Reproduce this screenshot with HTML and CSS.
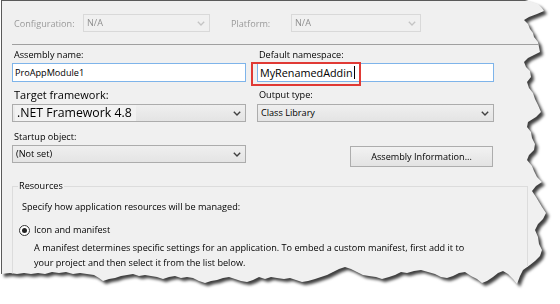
FILE: index.html
```html
<!DOCTYPE html>
<html>
<head>
<meta charset="utf-8">
<link rel="stylesheet" href="styles.css">
</head>
<body>
<div class="sheet">
  <div class="paper">
    <div class="toprow">
      <span class="dlabel cfg">Configuration:</span>
      <div class="combo disabled w-cfg"><span class="val">N/A</span><svg class="chev" width="8" height="5" viewBox="0 0 8 5"><path d="M0.8 0.8 L4 4 L7.2 0.8" fill="none" stroke="#c4c4c4" stroke-width="1.3"/></svg></div>
      <span class="dlabel plat">Platform:</span>
      <div class="combo disabled w-plat"><span class="val">N/A</span><svg class="chev" width="8" height="5" viewBox="0 0 8 5"><path d="M0.8 0.8 L4 4 L7.2 0.8" fill="none" stroke="#c4c4c4" stroke-width="1.3"/></svg></div>
    </div>
    <div class="sep"></div>
    <div class="grid">
      <div class="lbl">Assembly name:</div>
      <div class="lbl">Default namespace:</div>
      <div class="input">ProAppModule1</div>
      <div class="input ns">MyRenamedAddin<span class="caret"></span><div class="highlight"></div></div>
      <div class="lbl big">Target framework:</div>
      <div class="lbl">Output type:</div>
      <div class="combo"><span class="val big sel">.NET Framework 4.8</span><svg class="chev" width="8" height="5" viewBox="0 0 8 5"><path d="M0.8 0.8 L4 4 L7.2 0.8" fill="none" stroke="#404040" stroke-width="1.4"/></svg></div>
      <div class="combo"><span class="val">Class Library</span><svg class="chev" width="8" height="5" viewBox="0 0 8 5"><path d="M0.8 0.8 L4 4 L7.2 0.8" fill="none" stroke="#404040" stroke-width="1.4"/></svg></div>
      <div class="lbl">Startup object:</div>
      <div></div>
      <div class="combo top"><span class="val">(Not set)</span><svg class="chev" width="8" height="5" viewBox="0 0 8 5"><path d="M0.8 0.8 L4 4 L7.2 0.8" fill="none" stroke="#404040" stroke-width="1.4"/></svg></div>
      <div class="btncell"><div class="btn">Assembly Information...</div></div>
    </div>
    <fieldset class="group">
      <legend>Resources</legend>
      <div class="spec">Specify how application resources will be managed:</div>
      <div class="radiorow"><span class="radio"><span class="dot"></span></span><span>Icon and manifest</span></div>
      <div class="desc">A manifest determines specific settings for an application. To embed a custom manifest, first add it to<br>your project and then select it from the list below.</div>
    </fieldset>
  </div>
</div>
</body>
</html>
```
FILE: styles.css
```css
* { box-sizing: border-box; }
html, body { margin: 0; padding: 0; background: #ffffff; }
body {
  font-family: "Open Sans", "Noto Sans", sans-serif;
  font-size: 9.15px;
  color: #000;
  width: 560px;
  height: 304px;
  overflow: hidden;
}
.sheet {
  width: 560px;
  height: 304px;
  filter: drop-shadow(3px 3px 1.5px rgba(0,0,0,0.75));
}
.paper {
  margin-left: 1px;
  width: 550px;
  height: 292px;
  background: #f0f0f0;
  border-top: 1px solid #5a5a5a;
  border-left: 1px solid #5a5a5a;
  padding: 13px 0 0 10px;
  overflow: hidden;
  clip-path: polygon(0 0, 524px 0, 531px 2px, 537px 4px, 541px 8px, 543px 11px, 536px 14px, 528px 17px, 523px 20px, 527px 24px, 529px 29px, 532px 33px, 533px 37px, 537px 42px, 538px 47px, 539px 52px, 533px 55px, 527px 58px, 523px 62px, 525px 67px, 529px 71px, 530px 77px, 526px 82px, 528px 88px, 532px 93px, 534px 99px, 537px 105px, 540px 112px, 535px 117px, 527px 122px, 526px 127px, 530px 132px, 531px 138px, 534px 144px, 533px 150px, 528px 155px, 526px 160px, 531px 166px, 533px 171px, 536px 177px, 541px 182px, 535px 186px, 531px 191px, 535px 197px, 538px 202px, 541px 207px, 545px 213px, 542px 219px, 537px 224px, 534px 230px, 537px 237px, 538px 244px, 541px 250px, 539px 256px, 534px 261px, 529px 265px, 522px 270px, 519px 276px, 516px 284px, 512px 279px, 507px 274px, 502px 271px, 497px 273px, 492px 277px, 486px 281px, 481px 283px, 476px 279px, 470px 276px, 464px 272px, 458px 273px, 452px 276px, 446px 278px, 440px 277px, 434px 274px, 427px 272px, 420px 270px, 413px 271px, 406px 273px, 400px 272px, 394px 275px, 388px 277px, 381px 279px, 375px 277px, 368px 276px, 362px 275px, 356px 272px, 350px 269px, 344px 267px, 338px 269px, 332px 272px, 326px 275px, 320px 277px, 314px 279px, 307px 281px, 301px 282px, 295px 280px, 289px 278px, 283px 279px, 276px 278px, 270px 277px, 264px 279px, 258px 277px, 252px 280px, 246px 282px, 240px 281px, 234px 279px, 228px 277px, 222px 278px, 216px 280px, 210px 281px, 204px 283px, 198px 281px, 192px 278px, 186px 277px, 180px 278px, 174px 276px, 168px 277px, 162px 279px, 156px 277px, 150px 276px, 144px 275px, 138px 276px, 132px 274px, 126px 275px, 120px 276px, 114px 278px, 108px 279px, 102px 281px, 98px 278px, 93px 275px, 86px 274px, 79px 273px, 72px 274px, 65px 272px, 58px 273px, 51px 272px, 44px 274px, 37px 273px, 30px 274px, 23px 273px, 16px 274px, 9px 273px, 0 274px);
}
.toprow {
  display: flex;
  align-items: center;
  height: 18px;
}
.dlabel {
  color: #9a9a9a;
  padding-left: 2px;
}
.cfg { width: 71px; }
.plat { width: 62px; margin-left: 19px; }
.w-cfg { width: 127px; }
.w-plat { width: 130px; }
.combo {
  height: 18px;
  border: 1px solid #acacac;
  background: linear-gradient(#efefef, #e4e4e4);
  display: flex;
  align-items: center;
  justify-content: space-between;
  padding: 0 4px 0 3px;
  white-space: nowrap;
}
.combo.disabled {
  border-color: #d9d9d9;
  background: #f0f0f0;
  color: #8f8f8f;
}
.combo.top { align-self: start; }
.chev { flex: none; }
.val { line-height: 14px; }
.val.sel {
  background: #f2f2f2;
  margin-left: -1px;
  padding: 0 4px 0 2px;
  line-height: 16px;
}
.sep {
  height: 1px;
  background: #a0a0a0;
  margin-top: 12px;
  width: 540px;
}
.grid {
  display: grid;
  grid-template-columns: 234px 237px;
  column-gap: 11px;
  grid-template-rows: 18px 19px 21px 19px 23px 22px;
  align-items: end;
}
.lbl {
  line-height: 14px;
  padding-left: 2px;
  margin-bottom: 1px;
}
.lbl.big { font-size: 11px; line-height: 16px; margin-bottom: 0; }
.val.big { font-size: 12.3px; }
.input {
  position: relative;
  height: 19px;
  border: 1px solid #7eb4ea;
  background: #ffffff;
  padding-left: 2px;
  line-height: 17px;
  white-space: nowrap;
  align-self: start;
}
.input.ns { font-size: 10.8px; }
.caret {
  display: inline-block;
  width: 1px;
  height: 13px;
  background: #000;
  vertical-align: -2px;
  margin-left: 1px;
}
.highlight {
  position: absolute;
  left: -7px;
  top: -2px;
  width: 110px;
  height: 24px;
  border: 2px solid #e03a35;
}
.btncell {
  align-self: start;
  display: flex;
  justify-content: flex-end;
  padding-right: 1px;
}
.btn {
  width: 143px;
  height: 21px;
  margin-top: 1px;
  border: 1px solid #adadad;
  background: linear-gradient(#f2f2f2, #e3e3e3);
  display: flex;
  align-items: center;
  justify-content: center;
}
.group {
  margin: 12px 0 0 0;
  width: 516px;
  height: 130px;
  border: 1px solid #dcdcdc;
  padding: 0 0 0 5px;
  min-width: 0;
}
.group legend {
  padding: 0 1px;
  line-height: 14px;
}
.spec {
  margin-top: 7px;
  margin-left: 4px;
  line-height: 14px;
}
.radiorow {
  margin-top: 9px;
  margin-left: 1px;
  display: flex;
  align-items: center;
  line-height: 14px;
}
.radio {
  width: 11px;
  height: 11px;
  border: 1px solid #333;
  border-radius: 50%;
  background: #fff;
  display: flex;
  align-items: center;
  justify-content: center;
  margin-right: 4px;
}
.dot {
  width: 5px;
  height: 5px;
  border-radius: 50%;
  background: #222;
}
.desc {
  margin-top: 3px;
  margin-left: 16px;
  line-height: 15px;
}
```
